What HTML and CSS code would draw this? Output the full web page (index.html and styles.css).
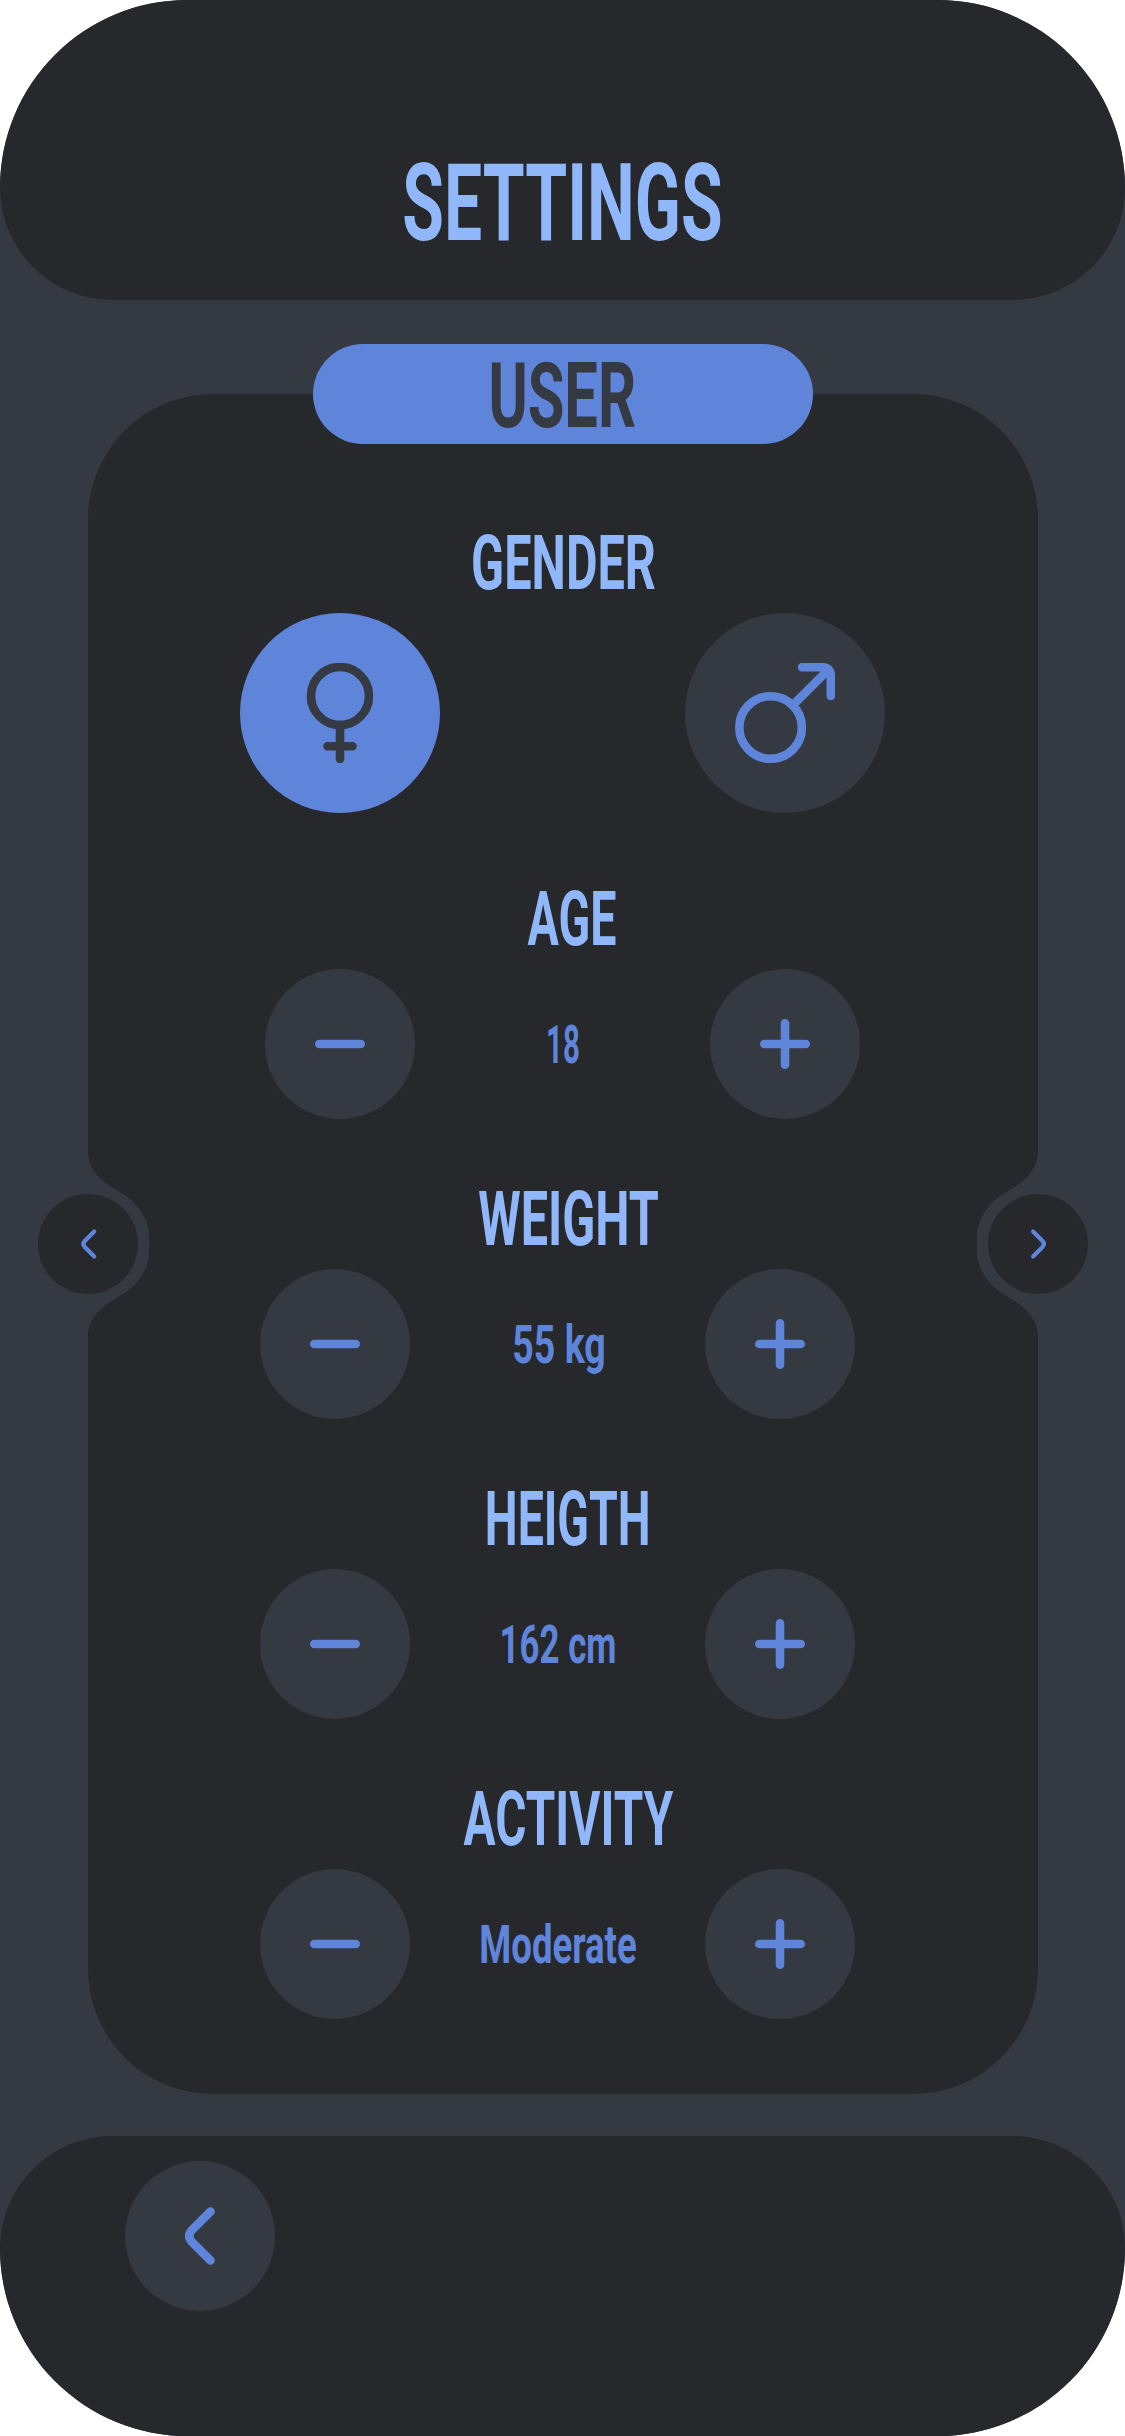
FILE: index.html
```html
<!DOCTYPE html>
<html lang="en">
<head>
<meta charset="utf-8">
<title>Settings</title>
<link rel="stylesheet" href="styles.css">
</head>
<body>
<div class="screen">
  <header class="top"><h1 class="title">SETTINGS</h1></header>

  <main class="panel">
    <div class="tab"><h2 class="tab-label">USER</h2></div>

    <section class="group gender">
      <h3 class="label l-gender">GENDER</h3>
      <div class="row">
        <button class="round big selected" aria-label="Female">
          <svg class="icon-big" viewBox="0 0 100 100"><circle cx="50" cy="33" r="29"/><path d="M50 62V96M37.5 83.3H62.5"/></svg>
        </button>
        <button class="round big" aria-label="Male">
          <svg class="icon-big" viewBox="0 0 100 100"><circle cx="35.6" cy="64.5" r="31.3"/><path d="M58 42L92 8M67 4.2H87Q95.8 4.2 95.8 13V33"/></svg>
        </button>
      </div>
    </section>

    <section class="group age">
      <h3 class="label l-age">AGE</h3>
      <div class="row">
        <button class="round" aria-label="Less"><svg class="icon" viewBox="0 0 50 50"><path d="M4.3 25H45.7"/></svg></button>
        <span class="value v-age">18</span>
        <button class="round" aria-label="More"><svg class="icon" viewBox="0 0 50 50"><path d="M4.3 25H45.7M25 4.3V45.7"/></svg></button>
      </div>
    </section>

    <section class="group shifted">
      <h3 class="label l-weight">WEIGHT</h3>
      <div class="row">
        <button class="round" aria-label="Less"><svg class="icon" viewBox="0 0 50 50"><path d="M4.3 25H45.7"/></svg></button>
        <span class="value v-weight">55 kg</span>
        <button class="round" aria-label="More"><svg class="icon" viewBox="0 0 50 50"><path d="M4.3 25H45.7M25 4.3V45.7"/></svg></button>
      </div>
    </section>

    <section class="group shifted">
      <h3 class="label l-height">HEIGTH</h3>
      <div class="row">
        <button class="round" aria-label="Less"><svg class="icon" viewBox="0 0 50 50"><path d="M4.3 25H45.7"/></svg></button>
        <span class="value v-height">162 cm</span>
        <button class="round" aria-label="More"><svg class="icon" viewBox="0 0 50 50"><path d="M4.3 25H45.7M25 4.3V45.7"/></svg></button>
      </div>
    </section>

    <section class="group shifted">
      <h3 class="label l-activity">ACTIVITY</h3>
      <div class="row">
        <button class="round" aria-label="Less"><svg class="icon" viewBox="0 0 50 50"><path d="M4.3 25H45.7"/></svg></button>
        <span class="value v-activity">Moderate</span>
        <button class="round" aria-label="More"><svg class="icon" viewBox="0 0 50 50"><path d="M4.3 25H45.7M25 4.3V45.7"/></svg></button>
      </div>
    </section>

    <svg class="side left" viewBox="0 0 112 184">
      <path class="notch" d="M50 0V1C50.5 18 64 30 80 39C97 48 111 65 111 84V100C111 119 97 136 80 145C64 154 50.5 166 50 183V184H0V0Z"/>
      <circle class="disc" cx="50" cy="92" r="50"/>
      <path class="chevron" d="M56.2 79.600L46.800 89Q44 92 46.800 95L56.2 104.400"/>
    </svg>
    <svg class="side right" viewBox="0 0 112 184">
      <path class="notch" d="M50 0V1C50.5 18 64 30 80 39C97 48 111 65 111 84V100C111 119 97 136 80 145C64 154 50.5 166 50 183V184H0V0Z"/>
      <circle class="disc" cx="50" cy="92" r="50"/>
      <path class="chevron" d="M54.900 79.600L45.500 89Q42.700 92 45.500 95L54.900 104.400"/>
    </svg>
  </main>

  <footer class="bottom">
    <button class="round" aria-label="Back">
      <svg class="icon-back" viewBox="0 0 30 60"><path d="M25.500 5.500L6.500 24.500Q2 30 6.500 35.500L25.500 54.500"/></svg>
    </button>
  </footer>
</div>
</body>
</html>
```
FILE: styles.css
```css
* { box-sizing: border-box; }
body { margin: 0; background: #fff; font-family: Roboto, "Liberation Sans", sans-serif; }
h1, h2, h3 { margin: 0; font-weight: 700; }

.screen {
  width: 1125px;
  height: 2436px;
  display: flex;
  flex-direction: column;
  align-items: center;
  background: #353942;
  border-radius: 187.5px;
  overflow: hidden;
}

.top, .bottom { width: 100%; height: 300px; flex: none; background: #27282c; }
.top {
  display: flex;
  justify-content: center;
  padding-top: 149px;
  border-radius: 0 0 112.5px 112.5px;
}
.bottom {
  margin-top: 42.5px;
  padding: 25px 125px;
  border-radius: 112.5px 112.5px 0 0;
}

/* Condensed lettering: each text has its own width factor (--w) and optical shift (--dx). */
.title, .tab-label, .label, .value {
  white-space: nowrap;
  transform: translateX(var(--dx, 0)) scaleX(var(--w));
}
.title { --w: .627; font-size: 108px; line-height: 108px; color: #90b7fa; }

.panel {
  position: relative;
  width: 950px;
  height: 1700px;
  margin-top: 93.5px;
  display: flex;
  flex-direction: column;
  align-items: center;
  background: #27282c;
  border-radius: 125px;
}
.tab {
  flex: none;
  width: 500px;
  height: 100px;
  margin-top: -50px;
  display: flex;
  justify-content: center;
  padding-top: 6.500px;
  border-radius: 50px;
  background: #5f85db;
}
.tab-label { --w: .652; font-size: 91.4px; line-height: 92px; color: #353942; }

.group { display: flex; flex-direction: column; align-items: center; width: 100%; height: 300px; flex: none; }
.gender { height: 356px; margin-top: 80px; }
.label { height: 89px; padding-top: 1px; font-size: 75.500px; line-height: 76px; color: #90b7fa; }
.l-gender { --w: .644; --dx: 1px; }
.l-age { --w: .617; --dx: 10px; }
.l-weight { --w: .643; --dx: 6px; }
.l-height { --w: .615; --dx: 5px; }
.l-activity { --w: .632; --dx: 5.500px; }

.row { display: flex; justify-content: space-between; align-items: center; width: 595px; }
.gender .row { width: 645px; }
.shifted .row { margin-left: -10px; }

.round {
  flex: none;
  width: 150px;
  height: 150px;
  padding: 0;
  border: 0;
  border-radius: 50%;
  display: grid;
  place-items: center;
  background: #353942;
  color: #5f85db;
}
.big { width: 200px; height: 200px; }
.selected { background: #5f85db; color: #353942; }
.round svg { fill: none; stroke: currentColor; stroke-width: 8.600; stroke-linecap: round; stroke-linejoin: round; }
.icon { width: 50px; height: 50px; }
.icon-big { width: 100px; height: 100px; }
.icon-back { width: 30px; height: 60px; }

.value {
  width: 0;
  display: flex;
  justify-content: center;
  padding-top: 2px;
  font-weight: 700;
  font-size: 54px;
  line-height: 54px;
  color: #5f85db;
}
.v-age { --w: .545; }
.v-weight { --w: .695; --dx: 1px; }
.v-height { --w: .645; }
.v-activity { --w: .677; }

.side { position: absolute; top: 758px; width: 112px; height: 184px; }
.left { left: -50px; }
.right { right: -50px; transform: scaleX(-1); }
.notch { fill: #353942; }
.disc { fill: #27282c; }
.chevron { fill: none; stroke: #5f85db; stroke-width: 4.200; stroke-linecap: round; stroke-linejoin: round; }
```
